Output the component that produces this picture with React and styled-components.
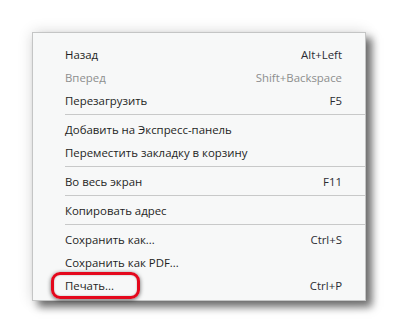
import React from "react";
import styled, { createGlobalStyle } from "styled-components";

const GlobalStyle = createGlobalStyle`
  html, body {
    margin: 0;
    background: #ffffff;
  }
`;

const Page = styled.div`
  width: 398px;
  height: 334px;
  padding: 32px 0 0 32px;
  box-sizing: border-box;
  font-family: "Open Sans", "Noto Sans", sans-serif;
  font-size: 11.4px;
`;

const Menu = styled.div`
  width: 334px;
  box-sizing: border-box;
  background: #f7f8f8;
  border: 1px solid #c4c5c5;
  padding: 10px 0 3px;
  box-shadow: 6px 6px 8px rgba(0, 0, 0, 0.55), 0 0 14px rgba(0, 0, 0, 0.14);
`;

const Row = styled.div`
  position: relative;
  height: 23px;
  display: flex;
  align-items: center;
  justify-content: space-between;
  padding: 0 23px 0 32px;
  color: ${(p) => (p.$disabled ? "#8d8e8e" : "#1e1f24")};
`;

const Shortcut = styled.span`
  color: ${(p) => (p.$disabled ? "#8d8e8e" : "#2a2c33")};
`;

const Separator = styled.div`
  height: 1px;
  margin: 2px 0 3px 32px;
  background: #c8c9c9;
`;

const Highlight = styled.div`
  position: absolute;
  left: 18px;
  top: -2px;
  width: 89px;
  height: 27px;
  box-sizing: border-box;
  border: 3px solid #e4081c;
  border-radius: 9px;
  box-shadow: 0 1px 4px rgba(0, 0, 0, 0.6), inset 0 0 2px rgba(0, 0, 0, 0.3);
`;

const groups = [
  [
    { label: "Назад", key: "Alt+Left" },
    { label: "Вперед", key: "Shift+Backspace", disabled: true },
    { label: "Перезагрузить", key: "F5" },
  ],
  [
    { label: "Добавить на Экспресс-панель" },
    { label: "Переместить закладку в корзину" },
  ],
  [{ label: "Во весь экран", key: "F11" }],
  [{ label: "Копировать адрес" }],
  [
    { label: "Сохранить как...", key: "Ctrl+S" },
    { label: "Сохранить как PDF..." },
    { label: "Печать...", key: "Ctrl+P", marked: true },
  ],
];

const App = () => {
  return (
    <>
      <GlobalStyle />
      <Page>
        <Menu>
          {groups.map((items, gi) => (
            <React.Fragment key={gi}>
              {gi > 0 && <Separator />}
              {items.map((item) => (
                <Row key={item.label} $disabled={item.disabled}>
                  <span>{item.label}</span>
                  {item.key && <Shortcut $disabled={item.disabled}>{item.key}</Shortcut>}
                  {item.marked && <Highlight />}
                </Row>
              ))}
            </React.Fragment>
          ))}
        </Menu>
      </Page>
    </>
  );
};

export default App;
